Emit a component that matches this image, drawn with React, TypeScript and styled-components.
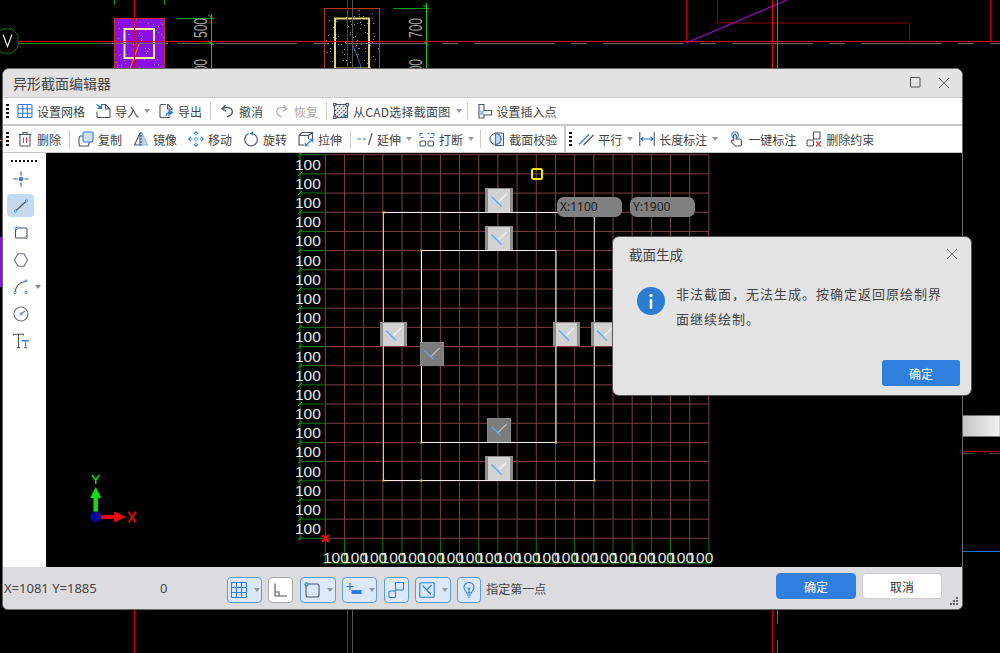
import type { ReactNode } from 'react'
import styled, { createGlobalStyle } from 'styled-components'

const BLUE = '#2b7de0'
const DARK = '#4c5361'

const Global = createGlobalStyle`
  html, body {
    margin: 0;
    height: 100%;
    background: #000;
    overflow: hidden;
  }
  * {
    box-sizing: border-box;
  }
`

const Desk = styled.div`
  position: relative;
  width: 1000px;
  height: 653px;
  overflow: hidden;
  font-family: "Noto Sans CJK SC", "Noto Sans", sans-serif;
  font-size: 12px;
  color: #444;
`

const Backdrop = styled.svg`
  position: absolute;
  inset: 0;
  display: block;
`

const Win = styled.div`
  position: absolute;
  left: 2px;
  top: 68px;
  width: 961px;
  height: 542px;
  display: flex;
  flex-direction: column;
  background: #dcdcde;
  border: 1px solid #666;
  border-radius: 7px 7px 6px 6px;
  overflow: hidden;
`

const TitleBar = styled.div`
  flex: none;
  height: 29px;
  display: flex;
  align-items: center;
  gap: 17px;
  padding: 0 12px 1px 10px;
  background: #e2e2e2;
  border-bottom: 1px solid #c8c8c8;
`

const TitleText = styled.div`
  flex: 1;
  font-size: 14px;
  line-height: 1;
  color: #444;
`

const Toolbar = styled.div`
  flex: none;
  height: 26px;
  display: flex;
  align-items: center;
  padding-left: 3px;
  background: #fff;
  white-space: nowrap;

  & + & {
    margin-top: 2px;
  }
`

const ToolbarStack = styled.div`
  flex: none;
  height: 55px;
  background: #c8c8c8;
`

const Grip = styled.i<{ $after?: number }>`
  width: 3px;
  height: 14px;
  margin-right: ${p => p.$after ?? 8}px;
  background: repeating-linear-gradient(to bottom, #111 0 2px, transparent 2px 4px);
`

const Sep = styled.i<{ $after?: number }>`
  width: 1px;
  height: 18px;
  margin-left: -3px;
  margin-right: ${p => p.$after ?? 8}px;
  background: #ccc;
`

const ThickSep = styled.i`
  width: 2px;
  height: 26px;
  margin: 0 3px 0 -4px;
  background: #c8c8c8;
`

const ToolItem = styled.div<{ $end: number; $muted?: boolean }>`
  display: flex;
  align-items: center;
  gap: 4px;
  padding-right: ${p => p.$end}px;
  line-height: 16px;
  color: ${p => (p.$muted ? '#aaa' : '#444')};
`

const ToolLabel = styled.span<{ $track?: number }>`
  margin-top: 2px;
  letter-spacing: ${p => p.$track ?? 0}px;
`

const Caret = styled.i`
  width: 0;
  height: 0;
  margin-left: 1px;
  border-left: 3.5px solid transparent;
  border-right: 3.5px solid transparent;
  border-top: 4px solid #999;
`

const Ico = styled.svg`
  display: block;
  flex: none;
  width: 16px;
  height: 16px;
  fill: none;
  stroke-width: 1.1;
`

const Main = styled.div`
  flex: 1;
  display: flex;
  min-height: 0;
`

const SidePanel = styled.div`
  flex: none;
  width: 43px;
  display: flex;
  flex-direction: column;
  padding-top: 7px;
  background: #fff;
`

const SideGrip = styled.i`
  width: 26px;
  height: 2px;
  margin: 0 0 3px 8px;
  background: repeating-linear-gradient(to right, #111 0 2px, transparent 2px 4px);
`

const SideSlot = styled.div`
  position: relative;
  height: 27px;
  display: flex;
  align-items: center;
  padding-left: 4px;
`

const SideButton = styled.div<{ $on?: boolean }>`
  width: 27px;
  height: 23px;
  display: flex;
  align-items: center;
  justify-content: center;
  border-radius: 4px;
  background: ${p => (p.$on ? '#c3daf0' : 'transparent')};
`

const SideCaret = styled(Caret)`
  margin-left: 1px;
  border-top-color: #888;
`

const Canvas = styled.div`
  position: relative;
  flex: 1;
  background: #000;
  overflow: hidden;
`

const Drawing = styled.svg`
  display: block;
`

const CoordPill = styled.div<{ $x: number }>`
  position: absolute;
  left: ${p => p.$x}px;
  top: 44px;
  width: 65px;
  height: 20px;
  padding-left: 3px;
  border-radius: 7px;
  background: #808080;
  color: #1c1c1c;
  font-family: "Noto Sans", sans-serif;
  font-size: 12px;
  line-height: 20px;
`

const StatusBar = styled.div`
  position: relative;
  flex: none;
  height: 42px;
  display: flex;
  align-items: center;
  padding: 0 20px 0 1px;
  background: #dcdcde;
  font-family: "Noto Sans", "Noto Sans CJK SC", sans-serif;
  font-size: 13px;
`

const Coords = styled.div`
  width: 156px;
`

const Zero = styled.div`
  width: 67px;
`

const ModeGroup = styled.div`
  display: flex;
  gap: 6.4px;
  margin-top: 4px;
`

const ModeButton = styled.div<{ $w: number; $off?: boolean }>`
  width: ${p => p.$w}px;
  height: 26px;
  display: flex;
  align-items: center;
  justify-content: ${p => (p.$w > 30 ? 'flex-start' : 'center')};
  gap: 6px;
  padding-left: ${p => (p.$w > 30 ? 3 : 0)}px;
  border: 1px solid ${p => (p.$off ? '#a8a8a8' : '#5b9ce8')};
  border-radius: 4px;
  background: ${p => (p.$off ? '#fff' : '#dbe9fb')};
`

const Hint = styled.div`
  margin-left: 5px;
  font-family: "Noto Sans CJK SC", sans-serif;
  font-size: 12px;
  color: #444;
`

const ActionGroup = styled.div`
  display: flex;
  gap: 6px;
  margin-left: auto;
  margin-top: -4px;
`

const ActionButton = styled.div<{ $primary?: boolean }>`
  width: 80px;
  height: 26px;
  display: flex;
  align-items: center;
  justify-content: center;
  font-family: "Noto Sans CJK SC", sans-serif;
  font-size: 12px;
  border-radius: 4px;
  border: 1px solid ${p => (p.$primary ? '#2e7fde' : '#cfcfcf')};
  background: ${p => (p.$primary ? '#2e7fde' : '#fff')};
  color: ${p => (p.$primary ? '#fff' : '#333')};
`

const ResizeGrip = styled.svg`
  position: absolute;
  right: 3px;
  bottom: 3px;
  width: 9px;
  height: 9px;
  fill: #666;
`

const Dialog = styled.div`
  position: absolute;
  left: 612px;
  top: 236px;
  width: 360px;
  height: 160px;
  display: flex;
  flex-direction: column;
  padding: 0 11px 9px 16px;
  background: #e3e3e3;
  border: 1px solid #555;
  border-radius: 7px;
`

const DialogHead = styled.div`
  flex: none;
  height: 34px;
  display: flex;
  align-items: center;
  justify-content: space-between;
  padding-right: 2px;
  font-size: 13.5px;
`

const DialogBody = styled.div`
  flex: 1;
  display: flex;
  gap: 11px;
  padding: 10px 0 0 8px;
`

const InfoDot = styled.div`
  flex: none;
  width: 28px;
  height: 28px;
  margin-top: 6px;
`

const Message = styled.div`
  width: 275px;
  font-size: 13px;
  letter-spacing: 1px;
  line-height: 25px;
  color: #444;
`

const DialogFoot = styled.div`
  display: flex;
  justify-content: flex-end;
`

const OkButton = styled.div`
  width: 78px;
  height: 26px;
  display: flex;
  align-items: center;
  justify-content: center;
  border-radius: 3px;
  background: #2e7fde;
  color: #fff;
  font-size: 12px;
`

/* ---------- icons ---------- */

const GridIcon = () => (
  <Ico viewBox="0 0 16 16" stroke={BLUE}>
    <rect x="1" y="1.5" width="14" height="13" rx="1" />
    <path d="M5.7 1.5v13M10.3 1.5v13M1 5.8h14M1 10.2h14" />
  </Ico>
)
const ImportIcon = () => (
  <Ico viewBox="0 0 16 16">
    <path d="M6 1.5h4.5L15 6v7.5a1 1 0 0 1-1 1H3a1 1 0 0 1-1-1V8.500M10.5 1.5V6H15" stroke={DARK} />
    <path d="M1.5 1.5c2 .3 3.2 1.3 3.6 3.5M3.2 5.4h3.4V2.4z" stroke={BLUE} fill={BLUE} />
  </Ico>
)
const ExportIcon = () => (
  <Ico viewBox="0 0 16 16">
    <path d="M8 1.5H3a1 1 0 0 0-1 1v11a1 1 0 0 0 1 1h8a1 1 0 0 0 1-1M9 1.5h1L14 6v1.5M9.5 1.5V6H14" stroke={DARK} />
    <path d="M8 13c.3-2 1.5-3.3 3.5-3.7M11 7.3v4.6l3.6-2.3z" stroke={BLUE} fill={BLUE} />
  </Ico>
)
const UndoIcon = () => (
  <Ico viewBox="0 0 16 16" stroke={DARK}>
    <path d="M6.5 2 3 5.8l4.2 2.4M3.2 5.8c3.2-2 9-1.8 10 1.8.8 3-2.2 5.2-5 6.2" strokeWidth="1.3" />
  </Ico>
)
const RedoIcon = () => (
  <Ico viewBox="0 0 16 16" stroke="#b5b5b5">
    <path d="M9.5 2 13 5.8 8.8 8.200M12.8 5.8c-3.2-2-9-1.8-10 1.8-.8 3 2.2 5.2 5 6.2" strokeWidth="1.3" />
  </Ico>
)
const CadIcon = () => (
  <Ico viewBox="0 0 16 16">
    <rect x="1.5" y="1.5" width="13" height="13" stroke={DARK} />
    <path d="M2 8l6-6M2 12l10-10M4 14 14 4M8 14l6-6" stroke={DARK} strokeDasharray="2 .8" />
    <rect x=".5" y=".5" width="2.4" height="2.4" fill="#fff" stroke={DARK} />
    <rect x="13" y=".5" width="2.4" height="2.4" fill="#fff" stroke={DARK} />
    <rect x=".5" y="13" width="2.4" height="2.4" fill="#fff" stroke={DARK} />
    <path d="M10.5 10.5v4.5l4-2.2z" fill={BLUE} />
  </Ico>
)
const InsertIcon = () => (
  <Ico viewBox="0 0 16 16">
    <path d="M2 1.5h5v6h7.5V12H7v3H2z" stroke={DARK} />
    <path d="M3 8l4 4M7 8l-4 4" stroke="#7fb2ee" strokeWidth="1.5" />
  </Ico>
)
const TrashIcon = () => (
  <Ico viewBox="0 0 16 16">
    <path d="M3 4v10a1 1 0 0 0 1 1h8a1 1 0 0 0 1-1V4M1.5 3.5h13M6 3.5V1.5h4v2" stroke={DARK} />
    <path d="M6.5 6.5V12M9.5 6.5V12" stroke="#e23c3c" />
  </Ico>
)
const CopyIcon = () => (
  <Ico viewBox="0 0 16 16">
    <rect x="1" y="5" width="10" height="10" rx="2" stroke={DARK} />
    <rect x="5" y="1" width="10" height="10" rx="1.5" stroke={BLUE} fill="#cfe2fa" />
  </Ico>
)
const MirrorIcon = () => (
  <Ico viewBox="0 0 16 16">
    <path d="M7 2 1.5 14H7z" stroke={DARK} />
    <path d="M9 2l5.5 12H9z" stroke="#9db6d6" fill="#c4d6ee" />
    <path d="M8 1v14" stroke={DARK} strokeDasharray="2 1" />
  </Ico>
)
const MoveIcon = () => (
  <Ico viewBox="0 0 16 16" stroke={BLUE}>
    <path d="M8 3v10M3 8h10" strokeDasharray="1.6 1.4" />
    <path d="M5.8 3 8 .8 10.2 3M5.8 13 8 15.2l2.2-2.2M3 5.8.8 8 3 10.2M13 5.8 15.2 8 13 10.2" />
  </Ico>
)
const RotateIcon = () => (
  <Ico viewBox="0 0 16 16">
    <path d="M5.5 2.8a6.3 6.3 0 1 0 5 0" stroke={DARK} />
    <path d="M10 .2v4.6L6.6 2.500z" fill={BLUE} />
  </Ico>
)
const StretchIcon = () => (
  <Ico viewBox="0 0 16 16">
    <path d="M1 4.5h9.5V8M1 4.5V14h5M1 4.5 4 1.5h10.5V8M10.5 4.5l4-3" stroke={DARK} />
    <path d="M7.5 14.5l7-6M7.3 11.5v3.3h3.3M11.6 8.3h3.2v3.2" stroke={BLUE} />
  </Ico>
)
const ExtendIcon = () => (
  <Ico viewBox="0 0 16 16">
    <path d="M.5 8h3.4M5.5 8h3.4" stroke={BLUE} strokeWidth="1.2" />
    <path d="M11.5 14 15 2" stroke={DARK} strokeWidth="1.2" />
  </Ico>
)
const BreakIcon = () => (
  <Ico viewBox="0 0 16 16">
    <path d="M1 5V2.5h3M1.5 6.5h3M8.5 2.5h2M15 5V2.5h-3M11 6.5h3.5" stroke={BLUE} />
    <rect x="1" y="10" width="5.5" height="5" rx="1.2" stroke={DARK} />
    <rect x="9" y="10" width="5.5" height="5" rx="1.2" stroke={DARK} />
  </Ico>
)
const CheckIcon = () => (
  <Ico viewBox="0 0 16 16">
    <path d="M6 2h7.5a1 1 0 0 1 1 1v10.5a1 1 0 0 1-1 1H6" stroke={DARK} />
    <circle cx="6.5" cy="8" r="5.5" stroke={DARK} />
    <path d="M6.5 2.5a5.5 5.5 0 0 1 0 11z" fill="#bcd6f6" stroke={BLUE} />
  </Ico>
)
const ParallelIcon = () => (
  <Ico viewBox="0 0 16 16">
    <path d="M1 13.5 11 3.5" stroke={BLUE} strokeWidth="1.2" />
    <path d="M5.5 14 15.5 4" stroke={DARK} strokeWidth="1.2" />
  </Ico>
)
const LengthIcon = () => (
  <Ico viewBox="0 0 16 16">
    <path d="M.8 1v14M15.2 1v14" stroke={DARK} />
    <path d="M2 8h12M4.4 6 2 8l2.4 2M11.6 6 14 8l-2.4 2" stroke={BLUE} />
  </Ico>
)
const OneKeyIcon = () => (
  <Ico viewBox="0 0 16 16">
    <circle cx="7" cy="4" r="3.2" stroke={BLUE} />
    <circle cx="7" cy="4" r="1.4" fill={BLUE} />
    <path d="M5.6 9.5V4.800a1.3 1.3 0 0 1 2.6 0V8h3.2a2 2 0 0 1 2 2v3.500a1.5 1.5 0 0 1-1.5 1.5H7.200L3.600 11c-1-1.2.6-2.600 2-1.500" stroke={DARK} fill="#fff" />
  </Ico>
)
const DropConstraintIcon = () => (
  <Ico viewBox="0 0 16 16">
    <rect x="1" y="9" width="6.5" height="6" rx="1.5" stroke={DARK} />
    <path d="M7.500 9V1.500A.5.5 0 0 1 8 1h5.500a.5.5 0 0 1 .5.5v6a.5.5 0 0 1-.5.5h-6" stroke={DARK} />
    <path d="M10 10.500l5 5M15 10.500l-5 5" stroke="#e23c3c" strokeWidth="1.2" />
  </Ico>
)

const SnapIcon = () => (
  <Ico viewBox="0 0 16 16" stroke={DARK}>
    <path d="M8 .5v4M8 11.500v4M.5 8h4M11.500 8h4" />
    <rect x="6" y="6" width="4" height="4" rx="1.2" fill={BLUE} stroke="none" />
  </Ico>
)
const Handle = ({ x, y }: { x: number; y: number }) => (
  <circle cx={x} cy={y} r="1.1" fill="#fff" stroke={BLUE} strokeWidth=".9" />
)
const LineIcon = () => (
  <Ico viewBox="0 0 16 16" stroke={DARK}>
    <path d="M2.500 13 13.500 3" />
    <Handle x={2.5} y={13} />
    <Handle x={13.5} y={3} />
  </Ico>
)
const RectIcon = () => (
  <Ico viewBox="0 0 16 16" stroke={DARK}>
    <rect x="2.5" y="3" width="11.5" height="10" rx="1" />
    <Handle x={3} y={3.5} />
    <Handle x={13.5} y={12.5} />
  </Ico>
)
const HexIcon = () => (
  <Ico viewBox="0 0 16 16" stroke="#666b78">
    <path d="M5 1.800h6L14.500 8 11 14.200H5L1.500 8z" />
  </Ico>
)
const ArcIcon = () => (
  <Ico viewBox="0 0 16 16" stroke={DARK}>
    <path d="M2 13.500C2.500 7.500 6.500 3 12.800 2.200" />
    <Handle x={2} y={13.5} />
    <Handle x={13} y={2} />
    <Handle x={13} y={13.5} />
  </Ico>
)
const CircleIcon = () => (
  <Ico viewBox="0 0 16 16" stroke="#6d7280">
    <circle cx="8" cy="8" r="7" />
    <path d="M8 8l4-3" />
    <Handle x={8} y={8} />
  </Ico>
)
const TextIcon = () => (
  <Ico viewBox="0 0 16 16">
    <path d="M.5 2.500V1.200h10v1.300M5.500 1.200v13.500M3.800 14.700h3.400" stroke={DARK} />
    <path d="M9.500 8.500v-.9h6.200v.9M12.600 7.600v7M11.200 14.600H14" stroke={BLUE} />
  </Ico>
)

const ModeGrid = () => (
  <Ico viewBox="0 0 16 16" stroke={BLUE}>
    <rect x=".5" y=".5" width="15" height="15" rx="1" />
    <path d="M5.500.5v15M10.500.5v15M.5 5.500h15M.5 10.500h15" />
  </Ico>
)
const ModeOrtho = () => (
  <Ico viewBox="0 0 16 16" stroke="#555">
    <path d="M2 1.500V14h12M2 10h4v4" />
  </Ico>
)
const ModeRect = () => (
  <Ico viewBox="0 0 16 16" stroke="#4f5968">
    <rect x="2" y="2" width="13" height="13" rx="2" />
    <circle cx="2.5" cy="2.5" r="1.6" fill="#dbe9fb" stroke={BLUE} />
  </Ico>
)
const ModePlus = () => (
  <Ico viewBox="0 0 16 16">
    <path d="M4 1v7M.5 4.500h7" stroke={BLUE} />
    <rect x="5.5" y="8" width="10" height="4" fill={BLUE} />
  </Ico>
)
const ModeLink = () => (
  <Ico viewBox="0 0 16 16" stroke={BLUE}>
    <rect x="1" y="9" width="6.5" height="6.5" rx="1" />
    <path d="M7.500 9V1.500a1 1 0 0 1 1-1h6a1 1 0 0 1 1 1V7a1 1 0 0 1-1 1h-7" />
  </Ico>
)
const ModeMark = () => (
  <Ico viewBox="0 0 16 16" stroke={BLUE}>
    <rect x=".8" y=".8" width="14.4" height="14.4" rx="1" />
    <path d="M3.500 3.500 12 12.500M7.800 8l4.700-5" />
  </Ico>
)
const ModeBulb = () => (
  <Ico viewBox="0 0 16 16" stroke={BLUE}>
    <path d="M5.500 11c0-2-2.500-2.700-2.500-5.500a5 5 0 0 1 10 0c0 2.800-2.500 3.500-2.500 5.500z" />
    <path d="M6 13h4M6.800 15h2.400M6.500 5.500 8 7.500l1.500-2M8 7.500V11" />
  </Ico>
)

/* ---------- toolbar ---------- */

type ToolProps = {
  icon: ReactNode
  label: string
  caret?: boolean
  end?: number
  muted?: boolean
  track?: number
}

const Tool = ({ icon, label, caret, end, muted, track }: ToolProps) => (
  <ToolItem $end={end ?? (caret ? 8 : 11)} $muted={muted}>
    {icon}
    <ToolLabel $track={track}>{label}</ToolLabel>
    {caret && <Caret />}
  </ToolItem>
)

/* ---------- cad drawing ---------- */

const STEP = 19.18
const GX = 325.3
const GY = 154.7
const ticks = Array.from({ length: 21 }, (_, i) => i)
const CAD_FONT = 'Liberation Sans, sans-serif'

const speckle = (x: number, y: number, w: number, h: number, n: number, seed: number) => {
  let s = seed
  const next = () => {
    s = (s * 9301 + 49297) % 233280
    return s / 233280
  }
  return Array.from({ length: n }, () => ({
    x: Math.round(x + next() * w),
    y: Math.round(y + next() * h),
  }))
}

const DimText = ({ x, y, children }: { x: number; y: number; children: string }) => (
  <text
    transform={`translate(${x} ${y}) rotate(-90)`}
    fontFamily={CAD_FONT}
    fontSize="18"
    fill="#a8a8a8"
    textLength="20"
    lengthAdjust="spacingAndGlyphs"
  >
    {children}
  </text>
)

const Background = () => (
  <Backdrop width="1000" height="653" viewBox="0 0 1000 653">
    <defs>
      <linearGradient id="bar" x1="0" x2="1" y1="0" y2="0">
        <stop offset="0" stopColor="#c4c4c4" />
        <stop offset="1" stopColor="#f2f2f2" />
      </linearGradient>
    </defs>

    <path d="M18 43.5h82" stroke="#0a9a0a" />
    <polygon points="2,29 12,29 18,35 18,47 12,53 2,53 -4,47 -4,35" fill="none" stroke="#0a7a0a" />
    <path d="M3 34.5l4.500 12 4.500-12" stroke="#e8e8e8" strokeWidth="1.2" fill="none" />

    <rect x="114.5" y="18.5" width="50" height="51" fill="#8a10e8" stroke="#c8301c" />
    {speckle(115, 19, 48, 49, 50, 17).map((d, i) => (
      <rect key={i} x={d.x} y={d.y} width="1" height="1" fill="#888" />
    ))}
    <rect x="124.5" y="29" width="29.5" height="29" fill="none" stroke="#f6ee9c" strokeWidth="2" />
    <path d="M130 69l9-25" stroke="#e8801c" />
    <path d="M114.500 0v5M164.500 0v5" stroke="#0a9a0a" />
    <path d="M177 18.500h37M177 43.500h37M177 68.500h37" stroke="#0a9a0a" />
    <path d="M211.500 14v55" stroke="#18c818" />
    <path d="M208 15l6 4M208 41l6 4" stroke="#18c818" />
    <DimText x={207} y={38}>500</DimText>
    <DimText x={207} y={79}>500</DimText>

    <rect x="324.5" y="8.5" width="55" height="61" fill="#000" stroke="#b8381a" />
    {speckle(326, 9, 52, 59, 80, 41).map((d, i) => (
      <rect key={i} x={d.x} y={d.y} width="1" height="1" fill="#888" />
    ))}
    <rect x="335" y="18.5" width="34" height="50" fill="none" stroke="#d8d47c" strokeWidth="2" />
    <path d="M352 43l10 26" stroke="#1b78d8" />
    <path d="M393 8.500h34M393 43.500h34M393 68.500h34" stroke="#0a9a0a" />
    <path d="M426.500 3v66" stroke="#18c818" />
    <path d="M423 5l6 4M423 41l6 4" stroke="#18c818" />
    <DimText x={422} y={38}>700</DimText>
    <DimText x={422} y={79}>700</DimText>

    <path d="M100 43.500H1000" stroke="#666" strokeDasharray="81 16 16 16" strokeDashoffset="13" />
    <path d="M18 41.500H1000" stroke="#e00000" />
    <path d="M134.500 0v69M347.500 0v69" stroke="#e00000" />
    <path d="M352.500 0v69" stroke="#555" />
    <path d="M686.500 0v41M990.500 0v41" stroke="#c00000" />
    <path d="M717.500 0v23H909.500V43" stroke="#900000" fill="none" />
    <path d="M686 43 787 0" stroke="#c000f0" />
    <path d="M772.500 0v69" stroke="#f00000" />
    <path d="M777.500 0v69" stroke="#777" />

    <rect x="0" y="237" width="2" height="50" fill="#8a10e8" />
    <path d="M0 140.500h3" stroke="#e8801c" />
    <rect x="962" y="415.5" width="38" height="21" fill="url(#bar)" stroke="#777" strokeWidth=".5" />
    <path d="M962 451.500h38" stroke="#c00000" />
    <path d="M962 453.500h12M989 453.500h11" stroke="#444" />
    <path d="M962 551.500h38" stroke="#1b78d8" />
    <path d="M134.500 609v44M347.500 609v44M772.500 609v44" stroke="#d00000" />
    <path d="M352.500 609v44" stroke="#555" />
    <path d="M777.500 610v14M777.500 640v13" stroke="#666" />
  </Backdrop>
)

const Marker = ({ x, y, w, h, dim }: { x: number; y: number; w: number; h: number; dim?: boolean }) => {
  const cx = x + w / 2
  return (
    <g>
      <rect x={x} y={y} width={w} height={h} fill={dim ? '#8a8a8a' : '#8e8e8e'} />
      <rect x={x + (dim ? 1 : 3)} y={y + 1} width={w - (dim ? 2 : 6)} height={h - 1} fill={dim ? '#7c7c7c' : '#d2d2d2'} />
      <path d={`M${cx - 1} ${y + 14.5}l8.500 -8.500`} stroke={dim ? '#b8b8b8' : '#f0f0f0'} strokeWidth="1.5" />
      {!dim && <path d={`M${cx - 7.5} ${y + 8.5}l10 10`} stroke="#bcd4f2" strokeWidth="3" />}
      <path d={`M${cx - 7.5} ${y + 8.5}l${dim ? 9 : 10} ${dim ? 9 : 10}`} stroke="#6ea4e4" strokeWidth="1.3" />
    </g>
  )
}

const Sheet = () => (
  <Drawing width="916" height="414" viewBox="46 153 916 414">
    {ticks.map(i => (
      <g key={i}>
        <path d={`M${GX + i * STEP} ${GY}V538.3`} stroke="#7c4248" />
        <path d={`M${GX} ${GY + i * STEP}H709`} stroke="#7c4248" />
        <path d={`M299 ${GY + i * STEP}H${GX}`} stroke="#0a7a0a" />
        <path d={`M${GX + i * STEP} 538.3V565`} stroke="#0a7a0a" />
        <path d={`M298 ${GY + i * STEP + 2}l4 -4`} stroke="#18c818" />
      </g>
    ))}
    <path d="M300 153V540M323 563H712" stroke="#0a8a0a" />
    <path d="M383.500 212.500V480M594.500 212.500V480" stroke="#c4c4c4" />
    <path d="M421.500 250.500V442.500M556 250.500V442.500" stroke="#fff" />
    <path d="M383.500 212.500H594.500M383.500 480.500H594.500M421.500 250.500H556M421.500 442.500H556" stroke="#eee" />
    {[
      [383.5, 212.5],
      [421.5, 250.5],
      [383.5, 480.5],
      [594.5, 480.5],
      [421.5, 442.5],
      [556, 442.5],
      [421.5, 480.5],
    ].map(([x, y]) => (
      <rect key={`${x}-${y}`} x={x - 1} y={y - 1} width="2" height="2" fill="#e8c820" />
    ))}
    <Marker x={485} y={188} w={28} h={24} />
    <Marker x={485} y={226} w={28} h={24} />
    <Marker x={380} y={322} w={27} h={24} />
    <Marker x={553} y={322} w={27} h={24} />
    <Marker x={591} y={322} w={27} h={24} />
    <Marker x={420} y={342} w={24} h={24} dim />
    <Marker x={487} y={418} w={24} h={24} dim />
    <Marker x={485} y={456} w={28} h={24} />
    <rect x="532" y="169" width="10" height="10" rx="1.5" fill="none" stroke="#f4e800" strokeWidth="2" />
    {ticks.slice(0, 20).map(i => (
      <text key={i} x="295" y={169.7 + i * STEP} fontFamily={CAD_FONT} fontSize="15.5" fill="#e8e8e8">
        100
      </text>
    ))}
    {ticks.slice(0, 20).map(i => (
      <text key={i} x={323 + i * STEP} y="562.5" fontFamily={CAD_FONT} fontSize="15.5" fill="#e8e8e8">
        100
      </text>
    ))}
    <path d="M322 535l7 7M329 535l-7 7" stroke="#f00000" strokeWidth="2.4" />

    <path d="M95.700 517V497" stroke="#10e010" strokeWidth="4.5" />
    <path d="M95.700 487l5.500 11h-11z" fill="#10e010" />
    <path d="M92 475l3.700 5 3.700-5M95.700 480v4" stroke="#10e010" strokeWidth="1.6" fill="none" />
    <path d="M96 517h19" stroke="#f00000" strokeWidth="4" />
    <path d="M126 517l-12-5.500v11z" fill="#f00000" />
    <circle cx="95.7" cy="516.7" r="5.5" fill="#000c96" />
    <path d="M128.500 511.500l7.500 11M136 511.500l-7.500 11" stroke="#f00000" strokeWidth="1.8" />
  </Drawing>
)

export default function App() {
  return (
    <Desk>
      <Global />
      <Background />
      <Win>
        <TitleBar>
          <TitleText>异形截面编辑器</TitleText>
          <svg width="11" height="11" viewBox="0 0 11 11" fill="none" stroke="#555">
            <rect x=".5" y=".5" width="9.5" height="9.5" rx=".5" />
          </svg>
          <svg width="12" height="12" viewBox="0 0 12 12" fill="none" stroke="#666">
            <path d="M1 1l10 10M11 1 1 11" />
          </svg>
        </TitleBar>
        <ToolbarStack>
          <Toolbar>
            <Grip />
            <Tool icon={<GridIcon />} label="设置网格" end={10} />
            <Tool icon={<ImportIcon />} label="导入" caret />
            <Tool icon={<ExportIcon />} label="导出" />
            <Sep />
            <Tool icon={<UndoIcon />} label="撤消" />
            <Tool icon={<RedoIcon />} label="恢复" muted />
            <Sep $after={6} />
            <Tool icon={<CadIcon />} label="从CAD选择截面图" caret track={0.25} />
            <Sep $after={9} />
            <Tool icon={<InsertIcon />} label="设置插入点" />
          </Toolbar>
          <Toolbar>
            <Grip />
            <Tool icon={<TrashIcon />} label="删除" />
            <Sep />
            <Tool icon={<CopyIcon />} label="复制" />
            <Tool icon={<MirrorIcon />} label="镜像" />
            <Tool icon={<MoveIcon />} label="移动" />
            <Tool icon={<RotateIcon />} label="旋转" />
            <Tool icon={<StretchIcon />} label="拉伸" />
            <Sep $after={6} />
            <Tool icon={<ExtendIcon />} label="延伸" caret end={7} />
            <Tool icon={<BreakIcon />} label="打断" caret end={9} />
            <Sep />
            <Tool icon={<CheckIcon />} label="截面校验" />
            <ThickSep />
            <Grip $after={6} />
            <Tool icon={<ParallelIcon />} label="平行" caret end={6} />
            <Tool icon={<LengthIcon />} label="长度标注" caret end={10} />
            <Tool icon={<OneKeyIcon />} label="一键标注" end={10} />
            <Tool icon={<DropConstraintIcon />} label="删除约束" />
          </Toolbar>
        </ToolbarStack>
        <Main>
          <SidePanel>
            <SideGrip />
            <SideSlot><SideButton><SnapIcon /></SideButton></SideSlot>
            <SideSlot><SideButton $on><LineIcon /></SideButton></SideSlot>
            <SideSlot><SideButton><RectIcon /></SideButton></SideSlot>
            <SideSlot><SideButton><HexIcon /></SideButton></SideSlot>
            <SideSlot><SideButton><ArcIcon /></SideButton><SideCaret /></SideSlot>
            <SideSlot><SideButton><CircleIcon /></SideButton></SideSlot>
            <SideSlot><SideButton><TextIcon /></SideButton></SideSlot>
          </SidePanel>
          <Canvas>
            <Sheet />
            <CoordPill $x={511}>X:1100</CoordPill>
            <CoordPill $x={584}>Y:1900</CoordPill>
          </Canvas>
        </Main>
        <StatusBar>
          <Coords>X=1081 Y=1885</Coords>
          <Zero>0</Zero>
          <ModeGroup>
            <ModeButton $w={35}><ModeGrid /><Caret /></ModeButton>
            <ModeButton $w={25} $off><ModeOrtho /></ModeButton>
            <ModeButton $w={36}><ModeRect /><Caret /></ModeButton>
            <ModeButton $w={35}><ModePlus /><Caret /></ModeButton>
            <ModeButton $w={25}><ModeLink /></ModeButton>
            <ModeButton $w={36}><ModeMark /><Caret /></ModeButton>
            <ModeButton $w={24}><ModeBulb /></ModeButton>
          </ModeGroup>
          <Hint>指定第一点</Hint>
          <ActionGroup>
            <ActionButton $primary>确定</ActionButton>
            <ActionButton>取消</ActionButton>
          </ActionGroup>
          <ResizeGrip viewBox="0 0 9 9">
            <rect x="6" y="0" width="2" height="2" />
            <rect x="3" y="3" width="2" height="2" />
            <rect x="6" y="3" width="2" height="2" />
            <rect x="0" y="6" width="2" height="2" />
            <rect x="3" y="6" width="2" height="2" />
            <rect x="6" y="6" width="2" height="2" />
          </ResizeGrip>
        </StatusBar>
      </Win>
      <Dialog>
        <DialogHead>
          <span>截面生成</span>
          <svg width="12" height="12" viewBox="0 0 12 12" fill="none" stroke="#777">
            <path d="M1 1l10 10M11 1 1 11" />
          </svg>
        </DialogHead>
        <DialogBody>
          <InfoDot>
            <svg width="28" height="28" viewBox="0 0 28 28">
              <circle cx="14" cy="14" r="14" fill="#2b7cd3" />
              <circle cx="14" cy="8.5" r="1.7" fill="#fff" />
              <rect x="12.7" y="12" width="2.6" height="10" rx="1" fill="#fff" />
            </svg>
          </InfoDot>
          <Message>非法截面，无法生成。按确定返回原绘制界面继续绘制。</Message>
        </DialogBody>
        <DialogFoot>
          <OkButton>确定</OkButton>
        </DialogFoot>
      </Dialog>
    </Desk>
  )
}
